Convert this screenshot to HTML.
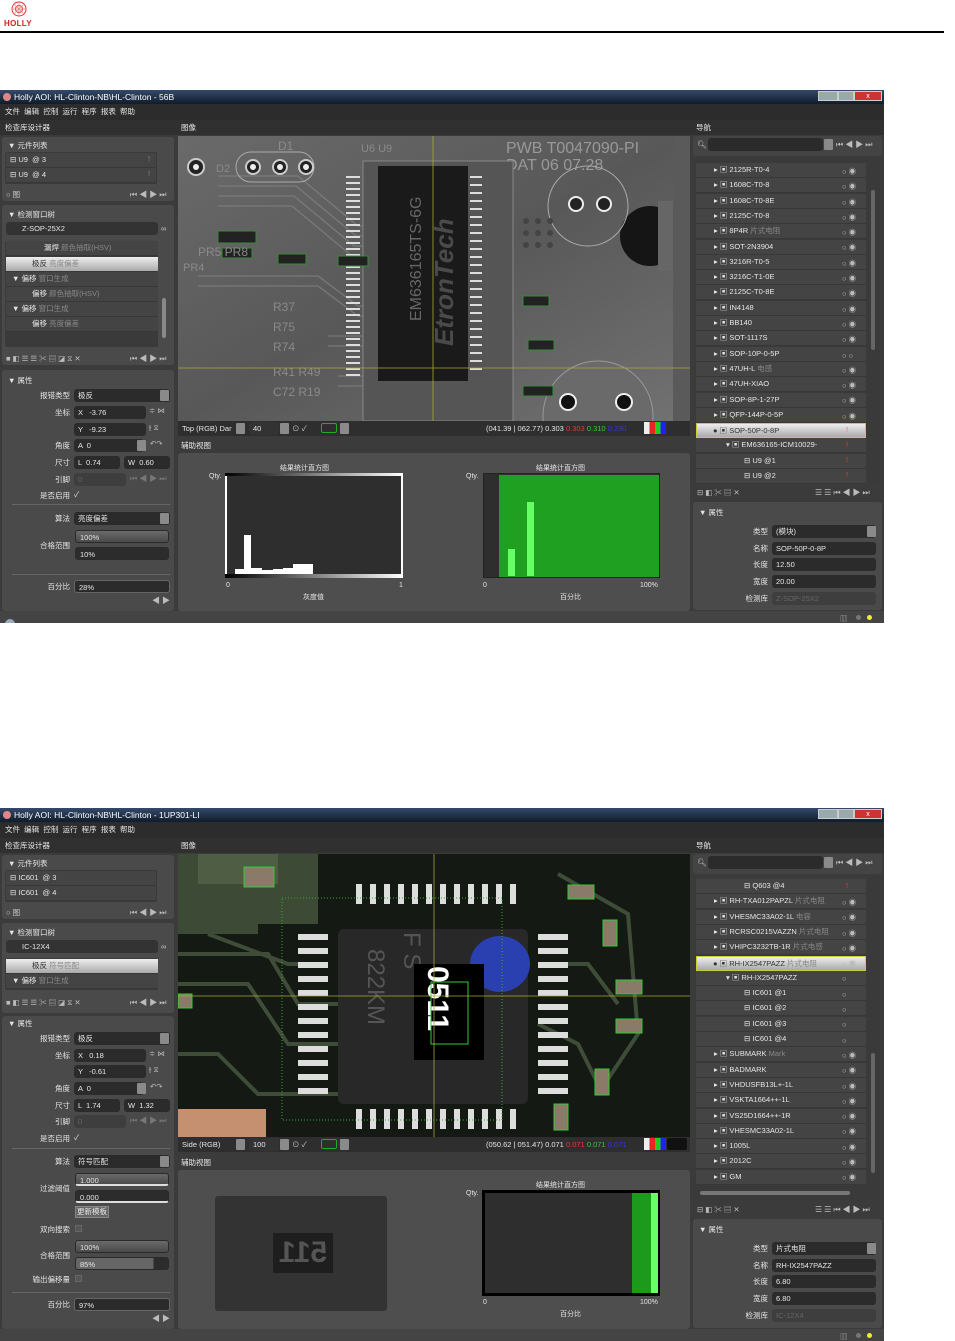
<!DOCTYPE html>
<html><head><meta charset="utf-8">
<style>
*{margin:0;padding:0;box-sizing:border-box}
body{width:955px;height:1341px;background:#fff;position:relative;overflow:hidden;font-family:"Liberation Sans","Noto Sans CJK SC",sans-serif}
.app{position:absolute;left:0;width:884px;height:533px;background:#3b3b3b;overflow:hidden;font-size:7.5px;color:#e6e6e6;font-family:"Liberation Sans","Noto Sans CJK SC",sans-serif}
.app div{position:absolute;white-space:nowrap}
.title{left:0;top:0;width:884px;height:14px;background:linear-gradient(#34496a,#101c2c);color:#fff;font-size:8.5px;line-height:14px;padding-left:14px}
.menu{left:0;top:14px;width:884px;height:16px;background:#2c2c2c;line-height:16px;padding-left:5px;font-size:7.5px}
.hdr{left:0;top:30px;width:884px;height:15px;background:#303030;line-height:15px}
.pn{background:#4a4a4a;border-radius:3px}
.box{background:#3a3a3a;border-radius:2px}
.row{background:#444;border-bottom:1px solid #383838;height:15px;line-height:14px}
.sel{background:linear-gradient(#eee,#aaa);color:#333}
.fld{background:#2b2b2b;border-radius:3px;height:13px;line-height:13px;padding-left:4px}
.lab{text-align:right;width:70px;left:0;line-height:13px}
.dd{width:9px;height:11px;background:#8a8a8a;border-radius:1px}
.gr{color:#888}
.nav{color:#bbb;font-size:8px;letter-spacing:2px}
.eye{color:#bbb}
.bar{background:linear-gradient(#6a6a6a,#4a4a4a);border-radius:3px;height:13px;line-height:13px;padding-left:4px;border:1px solid #2a2a2a}
.sep{height:1px;background:#666}
</style></head><body>

<svg style="position:absolute;left:8px;top:1px" width="22" height="17" viewBox="0 0 22 17"><circle cx="11" cy="8" r="7" fill="none" stroke="#e03030" stroke-width="1"/><circle cx="11" cy="8" r="3.5" fill="none" stroke="#e03030" stroke-width="1"/><path d="M11 1v14M4 8h14M6 3l10 10M16 3L6 13" stroke="#e88" stroke-width="0.7"/></svg>
<div style="position:absolute;left:4px;top:19px;font:bold 8px 'Liberation Sans',sans-serif;color:#d42020;letter-spacing:0.3px">HOLLY</div>
<div style="position:absolute;left:0;top:31px;width:944px;height:2px;background:#000"></div>

<!-- ============ SCREEN 1 ============ -->
<div class="app" style="top:90px">
 <div class="title">Holly AOI: HL-Clinton-NB\HL-Clinton - 56B</div>
 <div style="left:3px;top:3px;width:8px;height:8px;border-radius:50%;background:#d88"></div>
 <div style="left:818px;top:1px;width:20px;height:10px;background:#9aa;border:1px solid #ccc"></div>
 <div style="left:838px;top:1px;width:16px;height:10px;background:#9aa;border:1px solid #ccc"></div>
 <div style="left:854px;top:1px;width:28px;height:10px;background:#c33;border:1px solid #ccc;color:#fff;text-align:center;line-height:9px;font-size:7px">x</div>
 <div class="menu">文件 &nbsp;编辑 &nbsp;控制 &nbsp;运行 &nbsp;程序 &nbsp;报表 &nbsp;帮助</div>
 <div class="hdr"><span style="position:absolute;left:5px">检查库设计器</span><span style="position:absolute;left:181px">图像</span><span style="position:absolute;left:696px">导航</span></div>

 <div class="pn" style="left:2px;top:47px;width:172px;height:64px"></div>
 <div style="left:8px;top:50px">▼ 元件列表</div>
 <div class="box" style="left:5px;top:62px;width:152px;height:32px"></div>
 <div class="row" style="left:6px;top:63px;width:150px;padding-left:4px">⊟ U9 &nbsp;@ 3</div>
 <div class="row" style="left:6px;top:78px;width:150px;padding-left:4px">⊟ U9 &nbsp;@ 4</div>
 <div style="left:148px;top:64px;color:#888">!</div><div style="left:148px;top:79px;color:#888">!</div>
 <div style="left:6px;top:99px;color:#ccc">○ 图</div>
 <div class="nav" style="left:130px;top:99px">⏮◀▶⏭</div>

 <div class="pn" style="left:2px;top:115px;width:172px;height:160px"></div>
 <div style="left:8px;top:119px">▼ 检测窗口树</div>
 <div class="fld" style="left:6px;top:132px;width:152px;background:#333;padding-left:16px">Z-SOP-25X2</div>
 <div style="left:161px;top:134px;color:#ccc">∞</div>
 <div class="box" style="left:5px;top:151px;width:153px;height:106px"></div>
 <div class="row" style="left:6px;top:151px;width:152px;padding-left:38px">漏焊 <span class="gr">颜色抽取(HSV)</span></div>
 <div class="row sel" style="left:6px;top:167px;width:152px;padding-left:26px">极反 <span class="gr">亮度偏差</span></div>
 <div class="row" style="left:6px;top:182px;width:152px;padding-left:6px">▼ 偏移 <span class="gr">窗口生成</span></div>
 <div class="row" style="left:6px;top:197px;width:152px;padding-left:26px">偏移 <span class="gr">颜色抽取(HSV)</span></div>
 <div class="row" style="left:6px;top:212px;width:152px;padding-left:6px">▼ 偏移 <span class="gr">窗口生成</span></div>
 <div class="row" style="left:6px;top:227px;width:152px;padding-left:26px">偏移 <span class="gr">亮度偏差</span></div>
 <div style="left:162px;top:208px;width:4px;height:40px;background:#888;border-radius:2px"></div>
 <div style="left:6px;top:263px;color:#bbb;letter-spacing:2px">■◧☰☰✂▤◪⧖✕</div>
 <div class="nav" style="left:130px;top:263px">⏮◀▶⏭</div>

 <div class="pn" style="left:2px;top:280px;width:172px;height:241px"></div>
 <div style="left:8px;top:285px">▼ 属性</div>
 <div class="lab" style="top:299px">报错类型</div><div class="fld" style="left:74px;top:299px;width:96px">极反</div><div class="dd" style="left:160px;top:300px"></div>
 <div class="lab" style="top:316px">坐标</div><div class="fld" style="left:74px;top:316px;width:72px">X &nbsp;&nbsp;-3.76</div><div style="left:149px;top:316px;color:#bbb">≑ ⋈</div>
 <div class="fld" style="left:74px;top:333px;width:72px">Y &nbsp;&nbsp;-9.23</div><div style="left:149px;top:333px;color:#bbb">⫲ ⧖</div>
 <div class="lab" style="top:349px">角度</div><div class="fld" style="left:74px;top:349px;width:70px">A &nbsp;0</div><div class="dd" style="left:137px;top:350px"></div><div style="left:150px;top:349px;color:#bbb">↶↷</div>
 <div class="lab" style="top:366px">尺寸</div><div class="fld" style="left:74px;top:366px;width:46px">L &nbsp;0.74</div><div class="fld" style="left:124px;top:366px;width:46px">W &nbsp;0.60</div>
 <div class="lab" style="top:383px">引脚</div><div class="fld" style="left:74px;top:383px;width:52px;color:#666;background:#3e3e3e">0</div><div class="nav" style="left:130px;top:383px;color:#777">⏮◀▶⏭</div>
 <div class="lab" style="top:399px">是否启用</div><div style="left:74px;top:399px">✓</div>
 <div class="sep" style="left:12px;top:414px;width:158px"></div>
 <div class="lab" style="top:422px">算法</div><div class="fld" style="left:74px;top:422px;width:96px">亮度偏差</div><div class="dd" style="left:160px;top:423px"></div>
 <div class="lab" style="top:449px">合格范围</div><div class="bar" style="left:75px;top:440px;width:94px">100%</div><div class="bar" style="left:75px;top:457px;width:94px;background:#2c2c2c">10%</div>
 <div class="sep" style="left:12px;top:484px;width:158px"></div>
 <div class="lab" style="top:490px">百分比</div><div class="fld" style="left:74px;top:490px;width:96px;border:1px solid #666">28%</div>
 <div class="nav" style="left:152px;top:505px">◀▶</div>

 <div style="left:178px;top:46px;width:512px;height:285px;overflow:hidden">
  <svg width="512" height="285" viewBox="0 0 512 285" style="font-family:'Liberation Sans',sans-serif">
   <defs><linearGradient id="g1" x1="0" x2="1" y1="0" y2="1"><stop offset="0" stop-color="#6a6a6a"/><stop offset="0.5" stop-color="#585858"/><stop offset="1" stop-color="#727272"/></linearGradient></defs>
   <rect width="512" height="285" fill="url(#g1)"/>
   <g stroke="#858585" stroke-width="1.3" fill="none" opacity="0.7">
    <path d="M40 40 L120 40 L180 90 L260 90"/><path d="M40 50 L118 50 L178 100 L260 100"/><path d="M40 60 L116 60 L176 110 L260 110"/><path d="M40 70 L114 70 L174 120 L260 120"/><path d="M20 140 L140 140 L180 170 L260 170"/><path d="M20 150 L140 150 L180 180 L260 180"/><path d="M150 200 L260 200"/><path d="M150 210 L260 210"/><path d="M160 240 L260 240"/><path d="M160 250 L260 250"/>
   </g>
   <circle cx="18" cy="31" r="8" fill="#222" stroke="#ccc" stroke-width="2"/><circle cx="18" cy="31" r="3" fill="#eee"/>
   <rect x="58" y="16" width="78" height="30" rx="15" fill="none" stroke="#aaa"/>
   <circle cx="75" cy="31" r="7" fill="#222" stroke="#ccc" stroke-width="2"/><circle cx="75" cy="31" r="3" fill="#eee"/>
   <circle cx="102" cy="31" r="7" fill="#222" stroke="#ccc" stroke-width="2"/><circle cx="102" cy="31" r="3" fill="#eee"/>
   <circle cx="128" cy="31" r="7" fill="#222" stroke="#ccc" stroke-width="2"/><circle cx="128" cy="31" r="3" fill="#eee"/>
   <text x="100" y="14" fill="#8a8a8a" font-size="12">D1</text><text x="38" y="36" fill="#8a8a8a" font-size="11">D2</text>
   <text x="183" y="16" fill="#8a8a8a" font-size="11">U6 U9</text>
   <text x="328" y="17" fill="#999" font-size="16">PWB T0047090-PI</text><text x="328" y="34" fill="#999" font-size="16">DAT 06 07.28</text>
   <rect x="185" y="25" width="150" height="260" fill="#555" stroke="#888"/>
   <g fill="#ddd"><rect x="168" y="40" width="14" height="2"/><rect x="168" y="46" width="14" height="2"/><rect x="168" y="52" width="14" height="2"/><rect x="168" y="58" width="14" height="2"/><rect x="168" y="64" width="14" height="2"/><rect x="168" y="70" width="14" height="2"/><rect x="168" y="76" width="14" height="2"/><rect x="168" y="82" width="14" height="2"/><rect x="168" y="88" width="14" height="2"/><rect x="168" y="94" width="14" height="2"/><rect x="168" y="100" width="14" height="2"/><rect x="168" y="106" width="14" height="2"/><rect x="168" y="112" width="14" height="2"/><rect x="168" y="118" width="14" height="2"/><rect x="168" y="124" width="14" height="2"/><rect x="168" y="130" width="14" height="2"/><rect x="168" y="136" width="14" height="2"/><rect x="168" y="142" width="14" height="2"/><rect x="168" y="148" width="14" height="2"/><rect x="168" y="154" width="14" height="2"/><rect x="168" y="160" width="14" height="2"/><rect x="168" y="166" width="14" height="2"/><rect x="168" y="172" width="14" height="2"/><rect x="168" y="178" width="14" height="2"/><rect x="168" y="184" width="14" height="2"/><rect x="168" y="190" width="14" height="2"/><rect x="168" y="196" width="14" height="2"/><rect x="168" y="202" width="14" height="2"/><rect x="168" y="208" width="14" height="2"/><rect x="168" y="214" width="14" height="2"/><rect x="168" y="220" width="14" height="2"/><rect x="168" y="226" width="14" height="2"/><rect x="168" y="232" width="14" height="2"/><rect x="168" y="238" width="14" height="2"/>
   <rect x="292" y="40" width="12" height="2"/><rect x="292" y="48" width="12" height="2"/><rect x="292" y="56" width="12" height="2"/><rect x="292" y="64" width="12" height="2"/><rect x="292" y="72" width="12" height="2"/><rect x="292" y="80" width="12" height="2"/><rect x="292" y="88" width="12" height="2"/><rect x="292" y="96" width="12" height="2"/><rect x="292" y="104" width="12" height="2"/><rect x="292" y="112" width="12" height="2"/><rect x="292" y="120" width="12" height="2"/><rect x="292" y="128" width="12" height="2"/><rect x="292" y="136" width="12" height="2"/><rect x="292" y="144" width="12" height="2"/><rect x="292" y="152" width="12" height="2"/><rect x="292" y="160" width="12" height="2"/><rect x="292" y="168" width="12" height="2"/><rect x="292" y="176" width="12" height="2"/><rect x="292" y="184" width="12" height="2"/><rect x="292" y="192" width="12" height="2"/><rect x="292" y="200" width="12" height="2"/><rect x="292" y="208" width="12" height="2"/><rect x="292" y="216" width="12" height="2"/><rect x="292" y="224" width="12" height="2"/><rect x="292" y="232" width="12" height="2"/></g>
   <rect x="200" y="30" width="90" height="215" fill="#1a1a1a"/>
   <text transform="translate(243,185) rotate(-90)" fill="#666" font-size="16">EM636165TS-6G</text>
   <text transform="translate(275,210) rotate(-90)" fill="#4a4a4a" font-size="26" font-weight="bold" font-style="italic">EtronTech</text>
   <circle cx="472" cy="100" r="30" fill="#151515"/><rect x="480" y="65" width="40" height="70" fill="#666"/>
   <rect x="495" y="0" width="17" height="285" fill="#5a5a5a"/>
   <circle cx="410" cy="70" r="40" fill="none" stroke="#aaa"/>
   <circle cx="398" cy="68" r="7" fill="#222" stroke="#eee" stroke-width="2"/><circle cx="426" cy="68" r="7" fill="#222" stroke="#eee" stroke-width="2"/>
   <circle cx="420" cy="280" r="55" fill="#6a6a6a" stroke="#999"/>
   <circle cx="390" cy="266" r="8" fill="#111" stroke="#eee" stroke-width="2"/><circle cx="446" cy="266" r="8" fill="#111" stroke="#eee" stroke-width="2"/>
   <g fill="#444"><circle cx="348" cy="85" r="3"/><circle cx="360" cy="85" r="3"/><circle cx="372" cy="85" r="3"/><circle cx="348" cy="97" r="3"/><circle cx="360" cy="97" r="3"/><circle cx="372" cy="97" r="3"/><circle cx="348" cy="109" r="3"/><circle cx="360" cy="109" r="3"/><circle cx="372" cy="109" r="3"/></g>
   <g stroke="#3a8a3a" fill="#222"><rect x="40" y="95" width="38" height="12"/><rect x="44" y="112" width="30" height="10"/><rect x="100" y="118" width="28" height="10"/><rect x="160" y="120" width="30" height="10"/><rect x="345" y="250" width="30" height="10"/><rect x="350" y="204" width="26" height="10"/><rect x="345" y="160" width="26" height="10"/></g>
   <text x="20" y="120" fill="#8a8a8a" font-size="12">PR5 PR8</text><text x="5" y="135" fill="#8a8a8a" font-size="11">PR4</text>
   <text x="95" y="175" fill="#8a8a8a" font-size="12">R37</text><text x="95" y="195" fill="#8a8a8a" font-size="12">R75</text><text x="95" y="215" fill="#8a8a8a" font-size="12">R74</text><text x="95" y="240" fill="#8a8a8a" font-size="12">R41 R49</text><text x="95" y="260" fill="#8a8a8a" font-size="12">C72 R19</text>
   <line x1="0" y1="232" x2="512" y2="232" stroke="#a8a830" stroke-width="0.8"/>
   <line x1="255" y1="0" x2="255" y2="285" stroke="#a8a830" stroke-width="0.8"/>
  </svg>
 </div>
 <div style="left:178px;top:331px;width:512px;height:15px;background:#2e2e2e"></div>
 <div style="left:182px;top:334px">Top (RGB) Dar</div><div class="dd" style="left:236px;top:333px"></div>
 <div class="fld" style="left:249px;top:332px;width:30px;background:#333">40</div><div class="dd" style="left:280px;top:333px"></div>
 <div style="left:292px;top:333px;color:#ccc">⊙ ✓</div>
 <div style="left:321px;top:333px;width:16px;height:10px;border:1px solid #2a2;border-radius:2px"></div><div class="dd" style="left:340px;top:333px"></div>
 <div style="left:486px;top:334px">(041.39 | 062.77) 0.303 <span style="color:#e33">0.303</span> <span style="color:#3c3">0.310</span> <span style="color:#33e">0.290</span></div>
 <div style="left:644px;top:332px;width:22px;height:12px;background:linear-gradient(90deg,#eee 0 25%,#e22 25% 50%,#2c2 50% 75%,#22e 75%)"></div>
 <div style="left:181px;top:350px">辅助视图</div>
 <div style="left:178px;top:363px;width:512px;height:158px;background:#4e4e4e;border-radius:3px"></div>
 <div style="left:280px;top:373px;font-size:7px">结果统计直方图</div>
 <div style="left:209px;top:383px;font-size:7px">Qty.</div>
 <div style="left:225px;top:383px;width:178px;height:105px;background:#2e2e2e;border:2px solid #fff;border-top-color:#aaa"></div>
 <svg style="position:absolute;left:225px;top:383px" width="178" height="105"><defs><linearGradient id="hg"><stop offset="0" stop-color="#000"/><stop offset="1" stop-color="#fff"/></linearGradient></defs><rect x="0" y="0" width="178" height="3" fill="url(#hg)"/><rect x="0" y="101" width="178" height="4" fill="url(#hg)"/><path d="M10 101 V96 H19 V62 H26 V95 H37 V97 H48 V96 H58 V95 H68 V91 H88 V101Z" fill="#fff"/></svg>
 <div style="left:226px;top:492px;font-size:7px">0</div><div style="left:399px;top:492px;font-size:7px">1</div><div style="left:303px;top:502px;font-size:7px">灰度值</div>
 <div style="left:536px;top:373px;font-size:7px">结果统计直方图</div>
 <div style="left:466px;top:383px;font-size:7px">Qty.</div>
 <div style="left:483px;top:383px;width:177px;height:105px;background:#2e2e2e;border:1px solid #222"></div>
 <div style="left:499px;top:385px;width:160px;height:102px;background:#20a020"></div>
 <div style="left:508px;top:459px;width:7px;height:27px;background:#6f6"></div>
 <div style="left:527px;top:412px;width:7px;height:74px;background:#6f6"></div>
 <div style="left:483px;top:492px;font-size:7px">0</div><div style="left:640px;top:492px;font-size:7px">100%</div><div style="left:560px;top:502px;font-size:7px">百分比</div>

 <div class="pn" style="left:693px;top:46px;width:189px;height:20px;background:#444"></div>
 <div style="left:697px;top:50px;color:#ccc">🔍︎</div>
 <div class="fld" style="left:708px;top:48px;width:115px"></div><div class="dd" style="left:824px;top:49px"></div>
 <div class="nav" style="left:836px;top:49px">⏮◀▶⏭</div>
 <div class="box" style="left:695px;top:68px;width:185px;height:326px"></div>
 <div style="left:696px;top:73px;width:170px">
  <div class="row" style="left:0;top:0;width:170px;padding-left:18px">▸ ▣ 2125R-T0-4</div>
  <div class="row" style="left:0;top:15.3px;width:170px;padding-left:18px">▸ ▣ 1608C-T0-8</div>
  <div class="row" style="left:0;top:30.6px;width:170px;padding-left:18px">▸ ▣ 1608C-T0-8E</div>
  <div class="row" style="left:0;top:45.9px;width:170px;padding-left:18px">▸ ▣ 2125C-T0-8</div>
  <div class="row" style="left:0;top:61.2px;width:170px;padding-left:18px">▸ ▣ 8P4R <span class="gr">片式电阻</span></div>
  <div class="row" style="left:0;top:76.5px;width:170px;padding-left:18px">▸ ▣ SOT-2N3904</div>
  <div class="row" style="left:0;top:91.8px;width:170px;padding-left:18px">▸ ▣ 3216R-T0-5</div>
  <div class="row" style="left:0;top:107.1px;width:170px;padding-left:18px">▸ ▣ 3216C-T1-0E</div>
  <div class="row" style="left:0;top:122.4px;width:170px;padding-left:18px">▸ ▣ 2125C-T0-8E</div>
  <div class="row" style="left:0;top:137.7px;width:170px;padding-left:18px">▸ ▣ IN4148</div>
  <div class="row" style="left:0;top:153px;width:170px;padding-left:18px">▸ ▣ BB140</div>
  <div class="row" style="left:0;top:168.3px;width:170px;padding-left:18px">▸ ▣ SOT-1117S</div>
  <div class="row" style="left:0;top:183.6px;width:170px;padding-left:18px">▸ ▣ SOP-10P-0-5P</div>
  <div class="row" style="left:0;top:198.9px;width:170px;padding-left:18px">▸ ▣ 47UH-L <span class="gr">电感</span></div>
  <div class="row" style="left:0;top:214.2px;width:170px;padding-left:18px">▸ ▣ 47UH-XIAO</div>
  <div class="row" style="left:0;top:229.5px;width:170px;padding-left:18px">▸ ▣ SOP-8P-1-27P</div>
  <div class="row" style="left:0;top:244.8px;width:170px;padding-left:18px">▸ ▣ QFP-144P-0-5P</div>
  <div class="row sel" style="left:0;top:260.1px;width:170px;padding-left:16px;border:1px solid #cc3">● ▣ SOP-50P-0-8P</div>
  <div class="row" style="left:0;top:275.4px;width:170px;padding-left:30px">▾ ▣ EM636165-ICM10029-</div>
  <div class="row" style="left:0;top:290.7px;width:170px;padding-left:48px">⊟ U9 @1</div>
  <div class="row" style="left:0;top:306px;width:170px;padding-left:48px">⊟ U9 @2</div>
  <div class="eye" style="left:146px;top:1px;line-height:15.3px">○ ◉<br>○ ◉<br>○ ◉<br>○ ◉<br>○ ◉<br>○ ◉<br>○ ◉<br>○ ◉<br>○ ◉<br>○ ◉<br>○ ◉<br>○ ◉<br>○ ○<br>○ ◉<br>○ ◉<br>○ ◉<br>○ ◉</div>
  <div style="left:150px;top:262px;color:#f66">!</div><div style="left:150px;top:277px;color:#f33">!</div><div style="left:150px;top:292px;color:#f33">!</div><div style="left:150px;top:307px;color:#f33">!</div>
 </div>
 <div style="left:871px;top:100px;width:4px;height:160px;background:#666;border-radius:2px"></div>
 <div style="left:697px;top:397px;color:#bbb;letter-spacing:2px">⊟◧✂▤✕</div>
 <div class="nav" style="left:815px;top:397px">☰☰⏮◀▶⏭</div>
 <div class="pn" style="left:693px;top:412px;width:189px;height:108px"></div>
 <div style="left:699px;top:417px">▼ 属性</div>
 <div class="lab" style="top:435px;left:698px">类型</div><div class="fld" style="left:772px;top:435px;width:104px">(模块)</div><div class="dd" style="left:867px;top:436px"></div>
 <div class="lab" style="top:452px;left:698px">名称</div><div class="fld" style="left:772px;top:452px;width:104px">SOP-50P-0-8P</div>
 <div class="lab" style="top:468px;left:698px">长度</div><div class="fld" style="left:772px;top:468px;width:104px">12.50</div>
 <div class="lab" style="top:485px;left:698px">宽度</div><div class="fld" style="left:772px;top:485px;width:104px">20.00</div>
 <div class="lab" style="top:502px;left:698px">检测库</div><div class="fld" style="left:772px;top:502px;width:104px;color:#666;background:#3e3e3e">Z-SOP-25X2</div>
 <div style="left:0;top:521px;width:884px;height:12px;background:#444"></div>
 <div style="left:5px;top:529px;width:10px;height:10px;border-radius:50%;background:#9ab"></div>
 <div style="left:840px;top:523px;color:#aaa">▥</div>
 <div style="left:856px;top:525px;width:5px;height:5px;border-radius:50%;background:#777"></div>
 <div style="left:867px;top:525px;width:5px;height:5px;border-radius:50%;background:#ee3"></div>
</div>

<!-- ============ SCREEN 2 ============ -->
<div class="app" style="top:808px">
 <div class="title">Holly AOI: HL-Clinton-NB\HL-Clinton - 1UP301-LI</div>
 <div style="left:3px;top:3px;width:8px;height:8px;border-radius:50%;background:#d88"></div>
 <div style="left:818px;top:1px;width:20px;height:10px;background:#9aa;border:1px solid #ccc"></div>
 <div style="left:838px;top:1px;width:16px;height:10px;background:#9aa;border:1px solid #ccc"></div>
 <div style="left:854px;top:1px;width:28px;height:10px;background:#c33;border:1px solid #ccc;color:#fff;text-align:center;line-height:9px;font-size:7px">x</div>
 <div class="menu">文件 &nbsp;编辑 &nbsp;控制 &nbsp;运行 &nbsp;程序 &nbsp;报表 &nbsp;帮助</div>
 <div class="hdr"><span style="position:absolute;left:5px">检查库设计器</span><span style="position:absolute;left:181px">图像</span><span style="position:absolute;left:696px">导航</span></div>

 <div class="pn" style="left:2px;top:47px;width:172px;height:64px"></div>
 <div style="left:8px;top:50px">▼ 元件列表</div>
 <div class="box" style="left:5px;top:62px;width:152px;height:32px"></div>
 <div class="row" style="left:6px;top:63px;width:150px;padding-left:4px">⊟ IC601 &nbsp;@ 3</div>
 <div class="row" style="left:6px;top:78px;width:150px;padding-left:4px">⊟ IC601 &nbsp;@ 4</div>
 <div style="left:6px;top:99px;color:#ccc">○ 图</div>
 <div class="nav" style="left:130px;top:99px">⏮◀▶⏭</div>

 <div class="pn" style="left:2px;top:115px;width:172px;height:90px"></div>
 <div style="left:8px;top:119px">▼ 检测窗口树</div>
 <div class="fld" style="left:6px;top:132px;width:152px;background:#333;padding-left:16px">IC-12X4</div>
 <div style="left:161px;top:134px;color:#ccc">∞</div>
 <div class="box" style="left:5px;top:150px;width:153px;height:32px"></div>
 <div class="row sel" style="left:6px;top:151px;width:152px;padding-left:26px">极反 <span class="gr">符号匹配</span></div>
 <div class="row" style="left:6px;top:166px;width:152px;padding-left:6px">▼ 偏移 <span class="gr">窗口生成</span></div>
 <div style="left:6px;top:189px;color:#bbb;letter-spacing:2px">■◧☰☰✂▤◪⧖✕</div>
 <div class="nav" style="left:130px;top:189px">⏮◀▶⏭</div>

 <div class="pn" style="left:2px;top:208px;width:172px;height:313px"></div>
 <div style="left:8px;top:210px">▼ 属性</div>
 <div class="lab" style="top:224px">报错类型</div><div class="fld" style="left:74px;top:224px;width:96px">极反</div><div class="dd" style="left:160px;top:225px"></div>
 <div class="lab" style="top:241px">坐标</div><div class="fld" style="left:74px;top:241px;width:72px">X &nbsp;&nbsp;0.18</div><div style="left:149px;top:241px;color:#bbb">≑ ⋈</div>
 <div class="fld" style="left:74px;top:257px;width:72px">Y &nbsp;&nbsp;-0.61</div><div style="left:149px;top:257px;color:#bbb">⫲ ⧖</div>
 <div class="lab" style="top:274px">角度</div><div class="fld" style="left:74px;top:274px;width:70px">A &nbsp;0</div><div class="dd" style="left:137px;top:275px"></div><div style="left:150px;top:274px;color:#bbb">↶↷</div>
 <div class="lab" style="top:291px">尺寸</div><div class="fld" style="left:74px;top:291px;width:46px">L &nbsp;1.74</div><div class="fld" style="left:124px;top:291px;width:46px">W &nbsp;1.32</div>
 <div class="lab" style="top:307px">引脚</div><div class="fld" style="left:74px;top:307px;width:52px;color:#666;background:#3e3e3e">0</div><div class="nav" style="left:130px;top:307px;color:#777">⏮◀▶⏭</div>
 <div class="lab" style="top:324px">是否启用</div><div style="left:74px;top:324px">✓</div>
 <div class="sep" style="left:12px;top:340px;width:158px"></div>
 <div class="lab" style="top:347px">算法</div><div class="fld" style="left:74px;top:347px;width:96px">符号匹配</div><div class="dd" style="left:160px;top:348px"></div>
 <div class="lab" style="top:374px">过滤阈值</div><div class="bar" style="left:75px;top:365px;width:94px;border-bottom:2px solid #ddd">1.000</div><div class="bar" style="left:75px;top:382px;width:94px;background:#2c2c2c;border-bottom:2px solid #ddd">0.000</div>
 <div style="left:75px;top:398px;width:34px;height:12px;background:#666;border:1px solid #888;line-height:10px;padding-left:1px">更新模板</div>
 <div class="lab" style="top:415px">双向搜索</div><div style="left:75px;top:417px;width:7px;height:7px;background:#555;border:1px solid #666"></div>
 <div class="lab" style="top:441px">合格范围</div><div class="bar" style="left:75px;top:432px;width:94px">100%</div><div class="bar" style="left:75px;top:449px;width:94px;background:linear-gradient(90deg,#666 0 84%,#2c2c2c 84%)">85%</div>
 <div class="lab" style="top:465px">输出偏移量</div><div style="left:75px;top:467px;width:7px;height:7px;background:#555;border:1px solid #666"></div>
 <div class="sep" style="left:12px;top:484px;width:158px"></div>
 <div class="lab" style="top:490px">百分比</div><div class="fld" style="left:74px;top:490px;width:96px;border:1px solid #666">97%</div>
 <div class="nav" style="left:152px;top:505px">◀▶</div>

 <div style="left:178px;top:46px;width:512px;height:285px;overflow:hidden">
  <svg width="512" height="285" viewBox="0 0 512 285" style="font-family:'Liberation Sans',sans-serif">
   <rect width="512" height="285" fill="#141914"/>
   <path d="M0 0 H140 V70 H80 V80 H0Z" fill="#3c4a36"/>
   <path d="M20 0 H100 V30 H20Z" fill="#5a6a4e" opacity="0.6"/>
   <g stroke="#3f4d38" stroke-width="4" fill="none"><path d="M0 100 L90 100 L120 150 L170 150"/><path d="M0 130 L70 130 L110 190 L170 190"/><path d="M0 200 L40 200 L80 240 L170 240"/><path d="M380 20 L450 60 L460 180 L420 240"/><path d="M360 110 L410 110 L440 150"/><path d="M360 170 L400 190 L420 230"/><path d="M30 80 L110 110 L150 110"/></g>
   <rect x="0" y="255" width="88" height="30" fill="#c49070"/>
   <rect x="160" y="75" width="190" height="175" rx="6" fill="#282828"/>
   <g fill="#ddd"><rect x="178" y="30" width="6" height="20"/><rect x="192" y="30" width="6" height="20"/><rect x="206" y="30" width="6" height="20"/><rect x="220" y="30" width="6" height="20"/><rect x="234" y="30" width="6" height="20"/><rect x="248" y="30" width="6" height="20"/><rect x="262" y="30" width="6" height="20"/><rect x="276" y="30" width="6" height="20"/><rect x="290" y="30" width="6" height="20"/><rect x="304" y="30" width="6" height="20"/><rect x="318" y="30" width="6" height="20"/><rect x="332" y="30" width="6" height="20"/>
   <rect x="178" y="255" width="6" height="20"/><rect x="192" y="255" width="6" height="20"/><rect x="206" y="255" width="6" height="20"/><rect x="220" y="255" width="6" height="20"/><rect x="234" y="255" width="6" height="20"/><rect x="248" y="255" width="6" height="20"/><rect x="262" y="255" width="6" height="20"/><rect x="276" y="255" width="6" height="20"/><rect x="290" y="255" width="6" height="20"/><rect x="304" y="255" width="6" height="20"/><rect x="318" y="255" width="6" height="20"/><rect x="332" y="255" width="6" height="20"/>
   <rect x="120" y="80" width="30" height="6"/><rect x="120" y="94" width="30" height="6"/><rect x="120" y="108" width="30" height="6"/><rect x="120" y="122" width="30" height="6"/><rect x="120" y="136" width="30" height="6"/><rect x="120" y="150" width="30" height="6"/><rect x="120" y="164" width="30" height="6"/><rect x="120" y="178" width="30" height="6"/><rect x="120" y="192" width="30" height="6"/><rect x="120" y="206" width="30" height="6"/><rect x="120" y="220" width="30" height="6"/><rect x="120" y="234" width="30" height="6"/>
   <rect x="360" y="80" width="30" height="6"/><rect x="360" y="94" width="30" height="6"/><rect x="360" y="108" width="30" height="6"/><rect x="360" y="122" width="30" height="6"/><rect x="360" y="136" width="30" height="6"/><rect x="360" y="150" width="30" height="6"/><rect x="360" y="164" width="30" height="6"/><rect x="360" y="178" width="30" height="6"/><rect x="360" y="192" width="30" height="6"/><rect x="360" y="206" width="30" height="6"/><rect x="360" y="220" width="30" height="6"/><rect x="360" y="234" width="30" height="6"/></g>
   <text transform="translate(190,95) rotate(90)" fill="#555" font-size="24">822KM</text>
   <text transform="translate(226,78) rotate(90)" fill="#555" font-size="24">F S</text>
   <ellipse cx="322" cy="110" rx="30" ry="28" fill="#2a40b0"/>
   <rect x="236" y="110" width="70" height="96" fill="#000"/>
   <text transform="translate(250,112) rotate(90)" fill="#fff" font-size="30" font-weight="bold">0511</text>
   <rect x="253" y="128" width="37" height="62" fill="none" stroke="#3c3"/>
   <rect x="104" y="44" width="220" height="222" fill="none" stroke="#3a3" stroke-dasharray="1 2"/>
   <g fill="#8a7a6a" stroke="#3c3"><rect x="390" y="31" width="26" height="14"/><rect x="425" y="66" width="14" height="26"/><rect x="438" y="126" width="26" height="14"/><rect x="438" y="165" width="26" height="14"/><rect x="417" y="215" width="14" height="26"/><rect x="376" y="250" width="14" height="26"/><rect x="66" y="13" width="30" height="20"/><rect x="0" y="140" width="14" height="14"/></g>
   <line x1="0" y1="142" x2="512" y2="142" stroke="#a8a830" stroke-width="0.8"/>
   <line x1="256" y1="0" x2="256" y2="285" stroke="#a8a830" stroke-width="0.8"/>
  </svg>
 </div>
 <div style="left:178px;top:329px;width:512px;height:15px;background:#2e2e2e"></div>
 <div style="left:182px;top:332px">Side (RGB)</div><div class="dd" style="left:236px;top:331px"></div>
 <div class="fld" style="left:249px;top:330px;width:30px;background:#333">100</div><div class="dd" style="left:280px;top:331px"></div>
 <div style="left:292px;top:331px;color:#ccc">⊙ ✓</div>
 <div style="left:321px;top:331px;width:16px;height:10px;border:1px solid #2a2;border-radius:2px"></div><div class="dd" style="left:340px;top:331px"></div>
 <div style="left:486px;top:332px">(050.62 | 051.47) 0.071 <span style="color:#e33">0.071</span> <span style="color:#3c3">0.071</span> <span style="color:#33e">0.071</span></div>
 <div style="left:644px;top:330px;width:22px;height:12px;background:linear-gradient(90deg,#eee 0 25%,#e22 25% 50%,#2c2 50% 75%,#22e 75%)"></div>
 <div style="left:667px;top:330px;width:20px;height:12px;background:#111;border-radius:2px"></div>
 <div style="left:181px;top:349px">辅助视图</div>
 <div style="left:178px;top:362px;width:512px;height:159px;background:#4e4e4e;border-radius:3px"></div>
 <div style="left:215px;top:388px;width:172px;height:115px;background:#333;border-radius:3px"></div>
 <div style="left:273px;top:425px;width:60px;height:40px;background:#1e1e1e;color:#555;font-size:30px;line-height:40px;text-align:center;transform:scaleX(-1);font-weight:bold">511</div>
 <div style="left:536px;top:372px;font-size:7px">结果统计直方图</div>
 <div style="left:466px;top:382px;font-size:7px">Qty.</div>
 <div style="left:482px;top:382px;width:178px;height:106px;background:#2e2e2e;border:3px solid #000"></div>
 <div style="left:632px;top:385px;width:19px;height:100px;background:#1c9a1c"></div>
 <div style="left:651px;top:385px;width:7px;height:100px;background:#6f6"></div>
 <div style="left:483px;top:491px;font-size:7px">0</div><div style="left:640px;top:491px;font-size:7px">100%</div><div style="left:560px;top:501px;font-size:7px">百分比</div>

 <div class="pn" style="left:693px;top:46px;width:189px;height:20px;background:#444"></div>
 <div style="left:697px;top:50px;color:#ccc">🔍︎</div>
 <div class="fld" style="left:708px;top:48px;width:115px"></div><div class="dd" style="left:824px;top:49px"></div>
 <div class="nav" style="left:836px;top:49px">⏮◀▶⏭</div>
 <div class="box" style="left:695px;top:68px;width:185px;height:324px"></div>
 <div style="left:696px;top:71px;width:170px">
  <div class="row" style="left:0;top:0;width:170px;padding-left:48px">⊟ Q603 @4</div>
  <div class="row" style="left:0;top:15.3px;width:170px;padding-left:18px">▸ ▣ RH-TXA012PAPZL <span class="gr">片式电阻</span></div>
  <div class="row" style="left:0;top:30.6px;width:170px;padding-left:18px">▸ ▣ VHESMC33A02-1L <span class="gr">电容</span></div>
  <div class="row" style="left:0;top:45.9px;width:170px;padding-left:18px">▸ ▣ RCRSC0215VAZZN <span class="gr">片式电阻</span></div>
  <div class="row" style="left:0;top:61.2px;width:170px;padding-left:18px">▸ ▣ VHIPC3232TB-1R <span class="gr">片式电感</span></div>
  <div class="row sel" style="left:0;top:76.5px;width:170px;padding-left:16px;border:1px solid #cc3">● ▣ RH-IX2547PAZZ <span class="gr">片式电阻</span></div>
  <div class="row" style="left:0;top:91.8px;width:170px;padding-left:30px">▾ ▣ RH-IX2547PAZZ</div>
  <div class="row" style="left:0;top:107.1px;width:170px;padding-left:48px">⊟ IC601 @1</div>
  <div class="row" style="left:0;top:122.4px;width:170px;padding-left:48px">⊟ IC601 @2</div>
  <div class="row" style="left:0;top:137.7px;width:170px;padding-left:48px">⊟ IC601 @3</div>
  <div class="row" style="left:0;top:153px;width:170px;padding-left:48px">⊟ IC601 @4</div>
  <div class="row" style="left:0;top:168.3px;width:170px;padding-left:18px">▸ ▣ SUBMARK <span class="gr">Mark</span></div>
  <div class="row" style="left:0;top:183.6px;width:170px;padding-left:18px">▸ ▣ BADMARK</div>
  <div class="row" style="left:0;top:198.9px;width:170px;padding-left:18px">▸ ▣ VHDUSFB13L+-1L</div>
  <div class="row" style="left:0;top:214.2px;width:170px;padding-left:18px">▸ ▣ VSKTA1664++-1L</div>
  <div class="row" style="left:0;top:229.5px;width:170px;padding-left:18px">▸ ▣ VS25D1664++-1R</div>
  <div class="row" style="left:0;top:244.8px;width:170px;padding-left:18px">▸ ▣ VHESMC33A02-1L</div>
  <div class="row" style="left:0;top:260.1px;width:170px;padding-left:18px">▸ ▣ 1005L</div>
  <div class="row" style="left:0;top:275.4px;width:170px;padding-left:18px">▸ ▣ 2012C</div>
  <div class="row" style="left:0;top:290.7px;width:170px;padding-left:18px">▸ ▣ GM</div>
  <div style="left:150px;top:2px;color:#f33">!</div>
  <div class="eye" style="left:146px;top:16px;line-height:15.3px">○ ◉<br>○ ◉<br>○ ◉<br>○ ◉<br>○ ◉<br>○<br>○<br>○<br>○<br>○<br>○ ◉<br>○ ◉<br>○ ◉<br>○ ◉<br>○ ◉<br>○ ◉<br>○ ◉<br>○ ◉<br>○ ◉</div>
 </div>
 <div style="left:871px;top:245px;width:4px;height:120px;background:#666;border-radius:2px"></div>
 <div style="left:700px;top:383px;width:150px;height:4px;background:#777;border-radius:2px"></div>
 <div style="left:697px;top:396px;color:#bbb;letter-spacing:2px">⊟◧✂▤✕</div>
 <div class="nav" style="left:815px;top:396px">☰☰⏮◀▶⏭</div>
 <div class="pn" style="left:693px;top:411px;width:189px;height:109px"></div>
 <div style="left:699px;top:416px">▼ 属性</div>
 <div class="lab" style="top:434px;left:698px">类型</div><div class="fld" style="left:772px;top:434px;width:104px">片式电阻</div><div class="dd" style="left:867px;top:435px"></div>
 <div class="lab" style="top:451px;left:698px">名称</div><div class="fld" style="left:772px;top:451px;width:104px">RH-IX2547PAZZ</div>
 <div class="lab" style="top:467px;left:698px">长度</div><div class="fld" style="left:772px;top:467px;width:104px">6.80</div>
 <div class="lab" style="top:484px;left:698px">宽度</div><div class="fld" style="left:772px;top:484px;width:104px">6.80</div>
 <div class="lab" style="top:501px;left:698px">检测库</div><div class="fld" style="left:772px;top:501px;width:104px;color:#666;background:#3e3e3e">IC-12X4</div>
 <div style="left:0;top:521px;width:884px;height:12px;background:#444"></div>
 <div style="left:840px;top:523px;color:#aaa">▥</div>
 <div style="left:856px;top:525px;width:5px;height:5px;border-radius:50%;background:#777"></div>
 <div style="left:867px;top:525px;width:5px;height:5px;border-radius:50%;background:#ee3"></div>
</div>
</body></html>
